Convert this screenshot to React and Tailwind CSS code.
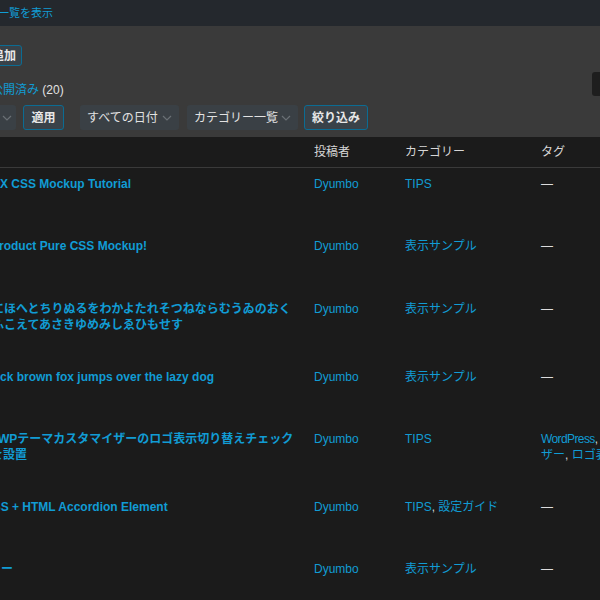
import React from 'react';

const Chevron = () => (
  <svg width="10" height="6" viewBox="0 0 10 6" className="shrink-0">
    <polyline points="1,1 5,5 9,1" fill="none" stroke="#6a7075" strokeWidth="1.2" />
  </svg>
);

function Select({ label, className }) {
  return (
    <div className={`h-[25px] rounded-[3px] bg-[#3a4045] flex items-center justify-between pl-[7px] text-[#e2e2e2] ${className}`}>
      <span>{label}</span>
      <Chevron />
    </div>
  );
}

function Button({ label, className }) {
  return (
    <div className={`rounded-[3px] border border-[#0b6c93] bg-[#394249] flex items-center text-[#e8e8e8] font-bold ${className}`}>
      {label}
    </div>
  );
}

const Link = ({ children, className = '' }) => <span className={`text-[#119cd4] ${className}`}>{children}</span>;
const Comma = () => <span className="text-[#d8d8d8]">, </span>;
const Dash = () => <span className="text-[#dcdcdc]">—</span>;

const rows = [
  {
    h: 'h-[62px]',
    title: [{ text: 'X CSS Mockup Tutorial', ml: 'ml-0' }],
    cat: <Link>TIPS</Link>,
    tags: [<Dash key="d" />],
  },
  {
    h: 'h-[63px]',
    title: [{ text: 'roduct Pure CSS Mockup!', ml: '-ml-[1px]' }],
    cat: <Link>表示サンプル</Link>,
    tags: [<Dash key="d" />],
  },
  {
    h: 'h-[68px]',
    title: [
      { text: 'にほへとちりぬるをわかよたれそつねならむうゐのおく', ml: '-ml-[8px]' },
      { text: 'ふこえてあさきゆめみしゑひもせす', ml: '-ml-[8px]' },
    ],
    cat: <Link>表示サンプル</Link>,
    tags: [<Dash key="d" />],
  },
  {
    h: 'h-[62px]',
    title: [{ text: 'ck brown fox jumps over the lazy dog', ml: 'ml-0' }],
    cat: <Link>表示サンプル</Link>,
    tags: [<Dash key="d" />],
  },
  {
    h: 'h-[68px]',
    title: [
      { text: 'WPテーマカスタマイザーのロゴ表示切り替えチェック', ml: '-ml-[2px]' },
      { text: 'を設置', ml: '-ml-[9px]' },
    ],
    cat: <Link>TIPS</Link>,
    tags: [
      <div key="1"><Link className="tracking-[-0.6px]">WordPress</Link><Comma /><Link>カスタマイ</Link></div>,
      <div key="2"><Link>ザー</Link><Comma /><Link>ロゴ表示</Link></div>,
    ],
  },
  {
    h: 'h-[62px]',
    title: [{ text: 'CSS + HTML Accordion Element', ml: '-ml-[16px]' }],
    cat: (
      <>
        <Link>TIPS</Link>
        <Comma />
        <Link>設定ガイド</Link>
      </>
    ),
    tags: [<Dash key="d" />],
  },
  {
    h: 'h-[62px]',
    title: [{ text: 'ー', ml: 'ml-[1px]' }],
    cat: <Link>表示サンプル</Link>,
    tags: [<Dash key="d" />],
  },
];

export default function App() {
  return (
    <div className="w-[600px] h-[600px] overflow-hidden bg-[#1b1b1b] text-[12px] leading-[16px] font-['Liberation_Sans','Noto_Sans_CJK_JP',sans-serif]">
      {/* top bar */}
      <div className="h-[26px] bg-[#24282d] flex items-center">
        <span className="text-[#119cd4] text-[11px] -ml-[2px] whitespace-nowrap">一覧を表示</span>
      </div>

      {/* filter panel */}
      <div className="bg-[#3a3a3a] pt-[19px] pb-[7px]">
        <div className="flex">
          <Button label="新規追加" className="h-[21px] -ml-[32px] w-[54px] bg-[#363b3f] justify-end pr-[5px] whitespace-nowrap" />
        </div>

        <div className="flex items-start justify-between mt-[6px]">
          <div className="mt-[10px] whitespace-nowrap -ml-[9px]">
            <Link>公開済み</Link>
            <span className="text-[#e2e2e2]"> (20)</span>
          </div>
          <div className="w-[60px] h-[24px] rounded-[3px] bg-[#1e1e1e] -mr-[52px]" />
        </div>

        <div className="flex items-center mt-[7px] whitespace-nowrap">
          <Select label="一括操作" className="-ml-[90px] w-[106px] pr-[4px]" />
          <Button label="適用" className="h-[25px] justify-center ml-[7px] w-[41px]" />
          <Select label="すべての日付" className="ml-[16px] w-[99px] pr-[7px]" />
          <Select label="カテゴリー一覧" className="ml-[8px] w-[111px] pr-[7px]" />
          <Button label="絞り込み" className="h-[25px] justify-center ml-[6px] w-[64px]" />
        </div>
      </div>

      {/* table */}
      <div className="w-[740px]">
        <div className="grid grid-cols-[304px_91px_136px_209px] h-[31px] items-center border-b border-[#3a3a3a] text-[#d6d6d6]">
          <div />
          <div className="pl-[10px]">投稿者</div>
          <div className="pl-[10px]">カテゴリー</div>
          <div className="pl-[10px]">タグ</div>
        </div>

        {rows.map((row, i) => (
          <div key={i} className={`grid grid-cols-[304px_91px_136px_209px] ${row.h} pt-[8px]`}>
            <div className="overflow-hidden pr-[10px] font-bold text-[#119cd4]">
              {row.title.map((line, j) => (
                <div key={j} className={`whitespace-nowrap ${line.ml}`}>
                  {line.text}
                </div>
              ))}
            </div>
            <div className="pl-[10px]">
              <Link>Dyumbo</Link>
            </div>
            <div className="pl-[10px] whitespace-nowrap">{row.cat}</div>
            <div className="pl-[10px] whitespace-nowrap">{row.tags}</div>
          </div>
        ))}
      </div>
    </div>
  );
}
